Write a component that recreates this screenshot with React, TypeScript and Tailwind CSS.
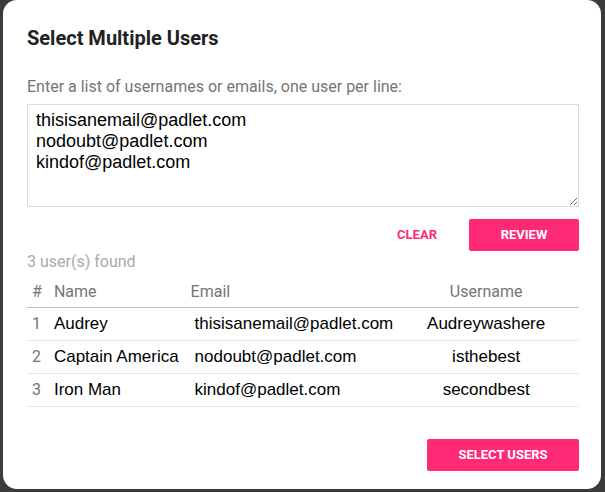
import React, { useState } from "react";

const PINK = "bg-[#ff2a76]";

type User = { name: string; email: string; username: string };

const USERS: User[] = [
  { name: "Audrey", email: "thisisanemail@padlet.com", username: "Audreywashere" },
  { name: "Captain America", email: "nodoubt@padlet.com", username: "isthebest" },
  { name: "Iron Man", email: "kindof@padlet.com", username: "secondbest" },
];

export default function App() {
  const [text, setText] = useState(USERS.map((u) => u.email).join("\n"));

  return (
    <div className="h-[492px] w-[605px] bg-[#3b3b3b] pl-[3px] pr-[4px] pb-[3px]">
      <div className="h-full rounded-[14px] bg-white pl-6 pr-[22px] pt-[26px] font-['Roboto',sans-serif]">
        <h1 className="text-[20px] font-bold leading-6 text-[#222]">Select Multiple Users</h1>

        <p className="mt-[27px] text-[16px] leading-5 text-[#757575]">
          Enter a list of usernames or emails, one user per line:
        </p>

        <textarea
          className="mt-[7px] block h-[103px] w-full resize-y border border-[#dcdcdc] px-2 pt-[5px] font-['Liberation_Sans',Arial,sans-serif] text-[18px] leading-[21px] text-black outline-none"
          value={text}
          onChange={(e) => setText(e.target.value)}
        />

        <div className="mt-3 flex items-center justify-end gap-8">
          <button type="button" className="text-[13px] font-bold text-[#ff2a76]" onClick={() => setText("")}>
            CLEAR
          </button>
          <button type="button" className={`${PINK} h-8 w-[110px] rounded-[2px] text-[13px] font-bold text-white`}>
            REVIEW
          </button>
        </div>

        <p className="mt-px text-[16px] leading-5 text-[#aaaaaa]">{USERS.length} user(s) found</p>

        <table className="mt-[5px] w-full border-collapse">
          <thead>
            <tr className="border-b border-[#bdbdbd] text-left text-[16px] text-[#757575]">
              <th className="h-[30px] w-[27px] pl-[5px] font-normal">#</th>
              <th className="w-[137px] font-normal">Name</th>
              <th className="font-normal">Email</th>
              <th className="w-[186px] text-center font-normal">Username</th>
            </tr>
          </thead>
          <tbody>
            {USERS.map((u, i) => (
              <tr key={u.email} className="h-[33px] border-b border-[#e5e5e5]">
                <td className="pl-[5px] text-[16px] text-[#757575]">{i + 1}</td>
                <td className="font-['Liberation_Sans',Arial,sans-serif] text-[17px] text-black">{u.name}</td>
                <td className="pl-1 font-['Liberation_Sans',Arial,sans-serif] text-[17px] text-black">{u.email}</td>
                <td className="text-center font-['Liberation_Sans',Arial,sans-serif] text-[17px] text-black">
                  {u.username}
                </td>
              </tr>
            ))}
          </tbody>
        </table>

        <div className="mt-[32px] flex justify-end">
          <button type="button" className={`${PINK} h-8 w-[152px] rounded-[2px] text-[13px] font-bold text-white`}>
            SELECT USERS
          </button>
        </div>
      </div>
    </div>
  );
}
